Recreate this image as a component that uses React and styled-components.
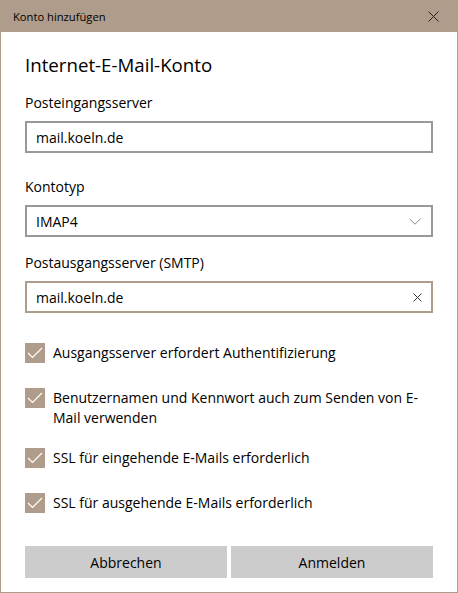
import React from 'react'
import styled, { createGlobalStyle } from 'styled-components'

const GlobalStyle = createGlobalStyle`
  html, body {
    margin: 0;
    padding: 0;
    background: #ffffff;
  }
  body {
    font-family: "Open Sans", "Liberation Sans", sans-serif;
    color: #000000;
  }
`

const accent = '#b09c8b'

const Window = styled.div`
  width: 458px;
  height: 593px;
  box-sizing: border-box;
  border: 1px solid ${accent};
  border-top: none;
  background: #ffffff;
  display: flex;
  flex-direction: column;
  overflow: hidden;
`

const TitleBar = styled.div`
  flex: none;
  height: 32px;
  margin: 0 -1px;
  background: ${accent};
  display: flex;
  align-items: center;
  justify-content: space-between;
  padding: 0 13px 0 13px;
  font-size: 11.2px;
  color: #000;
`

const CloseButton = styled.div`
  width: 12px;
  height: 12px;
  display: flex;
  align-items: center;
  justify-content: center;
  margin-right: 6px;
`

const Body = styled.div`
  padding: 0 24px;
  display: flex;
  flex-direction: column;
`

const Heading = styled.h1`
  margin: 19px 0 0;
  font-size: 18.7px;
  line-height: 28px;
  font-weight: 400;
`

const Label = styled.div`
  font-size: 14px;
  line-height: 20px;
  margin-top: ${p => p.$top}px;
`

const Field = styled.div`
  margin-top: 8px;
  height: 32px;
  box-sizing: border-box;
  border: 2px solid ${p => (p.$focused ? accent : '#999999')};
  display: flex;
  align-items: center;
  justify-content: space-between;
  padding: 0 9px 0 9px;
  font-size: 14px;
`

const Checks = styled.div`
  margin-top: 30px;
  display: flex;
  flex-direction: column;
  gap: 20px;
`

const CheckRow = styled.div`
  min-height: 25px;
  display: flex;
  align-items: flex-start;
  gap: 8px;
  font-size: 14px;
  line-height: 20px;
`

const Box = styled.div`
  flex: none;
  width: 20px;
  height: 20px;
  background: ${accent};
  display: flex;
  align-items: center;
  justify-content: center;
`

const Buttons = styled.div`
  margin-top: 28px;
  display: grid;
  grid-template-columns: 1fr 1fr;
  gap: 4px;
`

const Button = styled.div`
  height: 32px;
  background: #cccccc;
  display: flex;
  align-items: center;
  justify-content: center;
  font-size: 14px;
`

const Cross = ({ size = 10, color = '#000', w = 1 }) => (
  <svg width={size} height={size} viewBox={`0 0 ${size} ${size}`}>
    <path d={`M0.5 0.5 L${size - 0.5} ${size - 0.5} M${size - 0.5} 0.5 L0.5 ${size - 0.5}`} stroke={color} strokeWidth={w} fill="none" />
  </svg>
)

const Chevron = () => (
  <svg width="12" height="7" viewBox="0 0 12 7" style={{ marginRight: 1 }}>
    <path d="M0.5 0.8 L6 6.2 L11.5 0.8" stroke="#8a8a8a" strokeWidth="1" fill="none" />
  </svg>
)

const Tick = () => (
  <svg width="16" height="12" viewBox="0 0 16 12">
    <path d="M1 6 L5.5 10.5 L15 1" stroke="#ffffff" strokeWidth="1.2" fill="none" />
  </svg>
)

const Check = ({ children }) => (
  <CheckRow>
    <Box><Tick /></Box>
    <span>{children}</span>
  </CheckRow>
)

export default function App() {
  return (
    <>
      <GlobalStyle />
      <Window>
        <TitleBar>
          <span>Konto hinzufügen</span>
          <CloseButton><Cross size={11} color="#222" /></CloseButton>
        </TitleBar>
        <Body>
          <Heading>Internet-E-Mail-Konto</Heading>
          <Label $top={14}>Posteingangsserver</Label>
          <Field>mail.koeln.de</Field>
          <Label $top={24}>Kontotyp</Label>
          <Field>
            IMAP4
            <Chevron />
          </Field>
          <Label $top={16}>Postausgangsserver (SMTP)</Label>
          <Field $focused>
            mail.koeln.de
            <Cross size={9} color="#333" />
          </Field>
          <Checks>
            <Check>Ausgangsserver erfordert Authentifizierung</Check>
            <Check>Benutzernamen und Kennwort auch zum Senden von E-Mail verwenden</Check>
            <Check>SSL für eingehende E-Mails erforderlich</Check>
            <Check>SSL für ausgehende E-Mails erforderlich</Check>
          </Checks>
          <Buttons>
            <Button>Abbrechen</Button>
            <Button>Anmelden</Button>
          </Buttons>
        </Body>
      </Window>
    </>
  )
}
